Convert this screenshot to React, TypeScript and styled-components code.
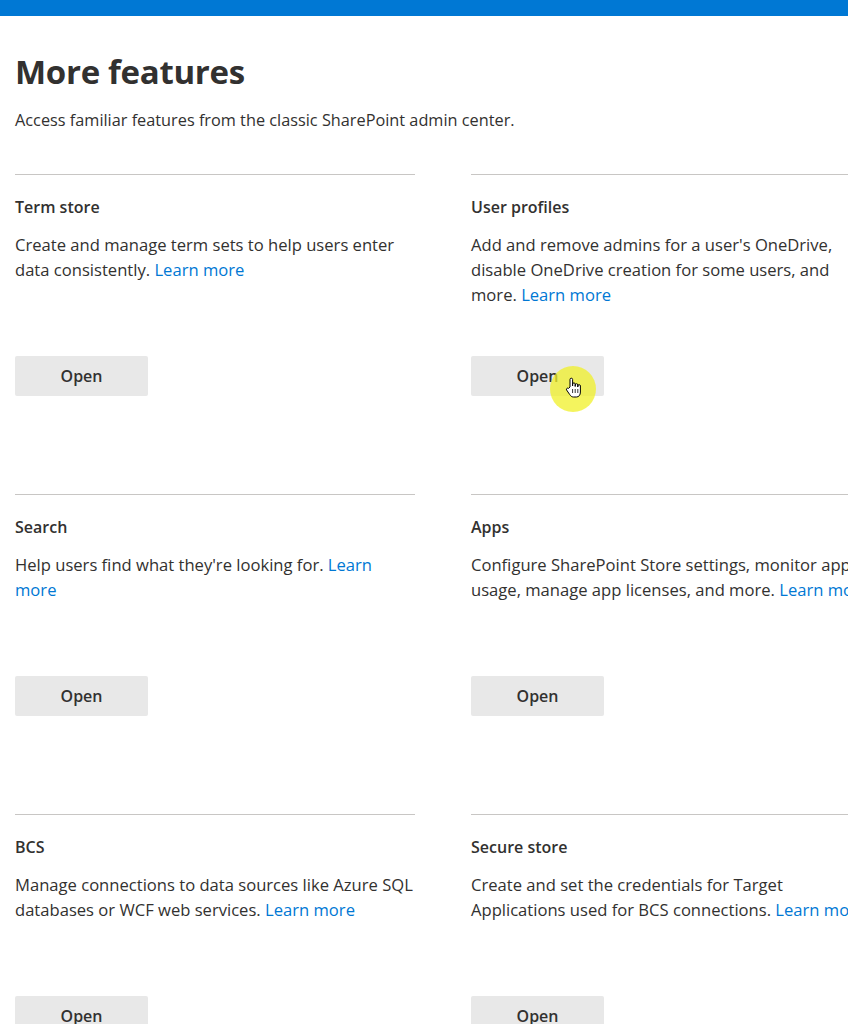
import styled, { createGlobalStyle } from "styled-components";

const GlobalStyle = createGlobalStyle`
  html, body {
    margin: 0;
    padding: 0;
    background: #fff;
    overflow: hidden;
  }
  body {
    font-family: "Open Sans", "Noto Sans", sans-serif;
    color: #323130;
  }
`;

const TopBar = styled.div`
  height: 16px;
  background: #0078d4;
`;

const Page = styled.main`
  padding: 0 0 0 15px;
  width: 900px;
`;

const Title = styled.h1`
  margin: 0;
  padding-top: 34px;
  font-size: 33px;
  line-height: 44px;
  font-weight: 700;
  letter-spacing: -0.3px;
`;

const Subtitle = styled.p`
  margin: 16px 0 0;
  font-size: 16.3px;
  line-height: 20px;
`;

const Grid = styled.div`
  margin-top: 44px;
  display: grid;
  grid-template-columns: 400px 400px;
  column-gap: 56px;
  grid-auto-rows: 320px;
`;

const Card = styled.section`
  border-top: 1px solid #c8c6c4;
  padding-top: 20px;
  display: grid;
  grid-template-rows: 24px 100px auto;
  row-gap: 13px;
  align-content: start;
`;

const CardTitle = styled.h2`
  margin: 0;
  font-size: 16px;
  line-height: 24px;
  font-weight: 600;
`;

const Desc = styled.p`
  margin: 0;
  font-size: 16.6px;
  line-height: 25px;
`;

const Link = styled.a`
  color: #0078d4;
  text-decoration: none;
`;

const ButtonWrap = styled.div`
  position: relative;
  margin-top: 11px;
  width: 133px;
`;

const OpenButton = styled.button`
  width: 133px;
  height: 40px;
  border: none;
  border-radius: 2px;
  background: #e8e8e8;
  color: #323130;
  font-family: inherit;
  font-size: 16px;
  font-weight: 600;
  cursor: pointer;
`;

const Highlight = styled.div`
  position: absolute;
  left: 79px;
  top: 10px;
  width: 46px;
  height: 46px;
  border-radius: 50%;
  background: rgba(240, 240, 40, 0.75);
  pointer-events: none;
  display: flex;
  align-items: center;
  justify-content: center;
`;

const HandCursor = () => (
  <svg width="18" height="22" viewBox="0 0 18 22" style={{ marginLeft: 2, marginTop: -2 }}>
    <path
      d="M5 10 V2.5 a1.3 1.3 0 0 1 2.6 0 V9 V7.2 a1.3 1.3 0 0 1 2.6 0 V9.5 V8 a1.3 1.3 0 0 1 2.6 0 V10 V9 a1.3 1.3 0 0 1 2.6 0 V15 c0 3 -1.5 5 -4 5 H8.5 c-1.8 0 -2.8 -1 -3.8 -2.5 L1.6 13 a1.3 1.3 0 0 1 2 -1.6 Z"
      fill="#fff"
      stroke="#000"
      strokeWidth="1"
      strokeLinejoin="round"
    />
    <path d="M7.6 12 V16 M10.2 12 V16 M12.8 12 V16" stroke="#000" strokeWidth="0.8" />
  </svg>
);

type Feature = {
  title: string;
  text: string;
  cursor?: boolean;
};

const features: Feature[] = [
  { title: "Term store", text: "Create and manage term sets to help users enter data consistently." },
  {
    title: "User profiles",
    text: "Add and remove admins for a user's OneDrive, disable OneDrive creation for some users, and more.",
    cursor: true,
  },
  { title: "Search", text: "Help users find what they're looking for." },
  {
    title: "Apps",
    text: "Configure SharePoint Store settings, monitor app usage, manage app licenses, and more.",
  },
  { title: "BCS", text: "Manage connections to data sources like Azure SQL databases or WCF web services." },
  {
    title: "Secure store",
    text: "Create and set the credentials for Target Applications used for BCS connections.",
  },
];

export const App = () => {
  return (
    <>
      <GlobalStyle />
      <TopBar />
      <Page>
        <Title>More features</Title>
        <Subtitle>Access familiar features from the classic SharePoint admin center.</Subtitle>
        <Grid>
          {features.map((f) => (
            <Card key={f.title}>
              <CardTitle>{f.title}</CardTitle>
              <Desc>
                {f.text} <Link href="#">Learn more</Link>
              </Desc>
              <ButtonWrap>
                <OpenButton>Open</OpenButton>
                {f.cursor && (
                  <Highlight>
                    <HandCursor />
                  </Highlight>
                )}
              </ButtonWrap>
            </Card>
          ))}
        </Grid>
      </Page>
    </>
  );
};

export default App;
